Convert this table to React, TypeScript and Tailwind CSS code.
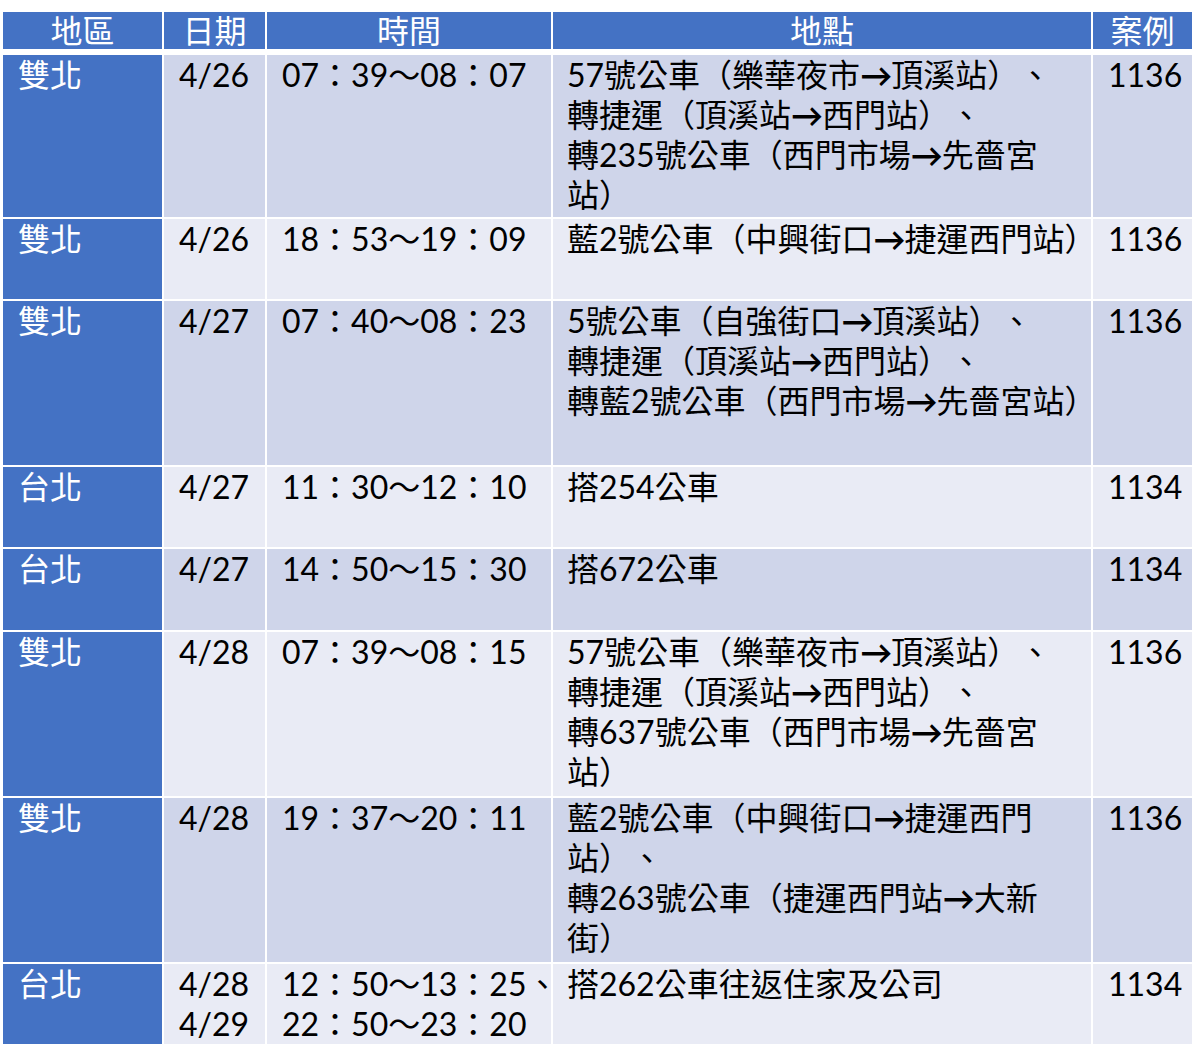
const font = { fontFamily: 'Lato, "Noto Sans CJK TC", sans-serif' };

type Row = { area: string; date: string[]; time: string[]; place: string[]; code: string; h: string; tone: "dark" | "light" };

const rows: Row[] = [
  {
    area: "雙北",
    date: ["4/26"],
    time: ["07：39～08：07"],
    place: ["57號公車（樂華夜市→頂溪站）、", "轉捷運（頂溪站→西門站）、", "轉235號公車（西門市場→先嗇宮", "站）"],
    code: "1136",
    h: "h-[162px]",
    tone: "dark",
  },
  {
    area: "雙北",
    date: ["4/26"],
    time: ["18：53～19：09"],
    place: ["藍2號公車（中興街口→捷運西門站）"],
    code: "1136",
    h: "h-[80px]",
    tone: "light",
  },
  {
    area: "雙北",
    date: ["4/27"],
    time: ["07：40～08：23"],
    place: ["5號公車（自強街口→頂溪站）、", "轉捷運（頂溪站→西門站）、", "轉藍2號公車（西門市場→先嗇宮站）"],
    code: "1136",
    h: "h-[164px]",
    tone: "dark",
  },
  {
    area: "台北",
    date: ["4/27"],
    time: ["11：30～12：10"],
    place: ["搭254公車"],
    code: "1134",
    h: "h-[80px]",
    tone: "light",
  },
  {
    area: "台北",
    date: ["4/27"],
    time: ["14：50～15：30"],
    place: ["搭672公車"],
    code: "1134",
    h: "h-[81px]",
    tone: "dark",
  },
  {
    area: "雙北",
    date: ["4/28"],
    time: ["07：39～08：15"],
    place: ["57號公車（樂華夜市→頂溪站）、", "轉捷運（頂溪站→西門站）、", "轉637號公車（西門市場→先嗇宮", "站）"],
    code: "1136",
    h: "h-[164px]",
    tone: "light",
  },
  {
    area: "雙北",
    date: ["4/28"],
    time: ["19：37～20：11"],
    place: ["藍2號公車（中興街口→捷運西門", "站）、", "轉263號公車（捷運西門站→大新", "街）"],
    code: "1136",
    h: "h-[164px]",
    tone: "dark",
  },
  {
    area: "台北",
    date: ["4/28", "4/29"],
    time: ["12：50～13：25、", "22：50～23：20"],
    place: ["搭262公車往返住家及公司"],
    code: "1134",
    h: "h-[80px]",
    tone: "light",
  },
];

// arrows in the source are a heavy chevron arrow, so render them apart
function Line({ text }: { text: string }) {
  const parts = text.split("→");
  return (
    <div className="whitespace-nowrap [text-spacing-trim:space-all]">
      {parts.map((p, i) => (
        <span key={i}>
          {i > 0 && <span className="font-bold tracking-[-1px]">→</span>}
          {p}
        </span>
      ))}
    </div>
  );
}

function Lines({ items }: { items: string[] }) {
  return (
    <>
      {items.map((t, i) => (
        <Line key={i} text={t} />
      ))}
    </>
  );
}

export default function App() {
  return (
    <div className="w-[1200px] h-[1062px] bg-white pt-[12px] pl-[3px] text-[32px] leading-[40px]" style={font}>
      <div className="grid grid-cols-[159px_101px_284px_538px_99px] gap-x-[2px] w-[1189px]">
        {["地區", "日期", "時間", "地點", "案例"].map((h) => (
          <div key={h} className="bg-[#4472c4] text-white text-center h-[37px] leading-[37px]">
            {h}
          </div>
        ))}
      </div>
      <div className="flex flex-col gap-y-[2px] mt-[6px] w-[1189px]">
        {rows.map((r, i) => {
          const bg = r.tone === "dark" ? "bg-[#cfd5ea]" : "bg-[#e9ebf5]";
          return (
            <div key={i} className={`grid grid-cols-[159px_101px_284px_538px_99px] gap-x-[2px] ${r.h}`}>
              <div className="bg-[#4472c4] text-white pl-[15px]">{r.area}</div>
              <div className={`${bg} text-black pl-[15px]`}>
                <Lines items={r.date} />
              </div>
              <div className={`${bg} text-black pl-[15px]`}>
                <Lines items={r.time} />
              </div>
              <div className={`${bg} text-black pl-[14px]`}>
                <Lines items={r.place} />
              </div>
              <div className={`${bg} text-black pl-[15px]`}>{r.code}</div>
            </div>
          );
        })}
      </div>
    </div>
  );
}
